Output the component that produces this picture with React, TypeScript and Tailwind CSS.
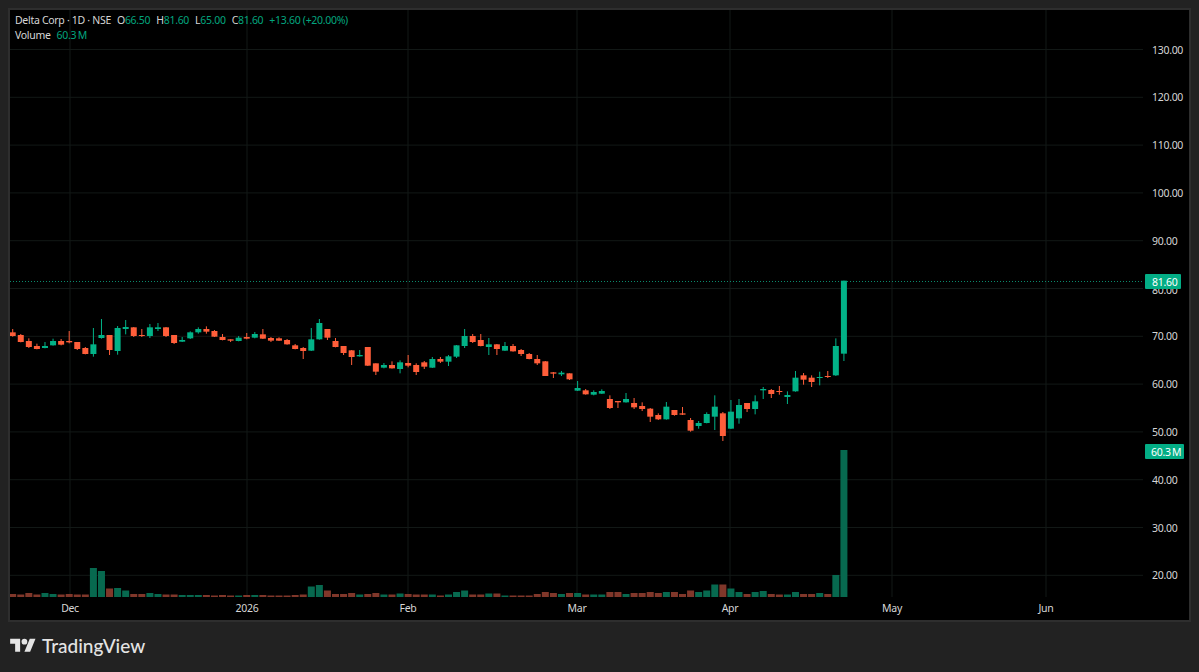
const FONT = '"Noto Sans", "Liberation Sans", sans-serif';
const LOGO_FONT = 'Lato, "Noto Sans", sans-serif';

// [wickTop, wickBottom, bodyTop, bodyBottom, up(1)/down(0), volumeHeight] in chart pixels x3, offset from y = 310
const Z2: number[][] = [
  [57,80,67,78,0,3],[72,97,75,96,0,2.5],[85,114,93,111,0,4],[101,118,108,117,0,2.5],[96,115,108,114,1,4],[86,107,93,106,1,3],[87,106,93,104,0,2.5],[63,100,93,97,0,3],[96,120,96,117,0,2.5],[111,133,114,132,0,2.5],
  [54,140,103,132,1,29],[27,86,75,84,1,26],[75,135,75,120,0,8.5],[48,134,54,123,1,9],[30,73,51,57,1,6.5],[51,81,52,78,0,3],[57,81,75,78,0,3],[42,84,52,78,1,4],[39,63,52,57,1,3],[51,81,52,78,0,2.5],
  [75,102,75,99,0,2.5],[81,96,90,95,1,2],[64,87,67,85,1,2],[52,71,57,67,1,2],[49,71,57,65,0,2],[60,81,63,80,0,1.5],[72,91,81,90,0,2],[88,96,88,92,0,1.5],[78,94,83,93,1,1.5],[69,88,81,86,0,2],
  [66,85,72,83,1,2],[57,87,73,86,0,2],[81,96,84,92,0,1.5],[82,93,85,92,0,1.5],[87,104,90,103,0,1.5],[102,118,106,117,0,2],[111,147,114,123,0,2.5],[54,123,88,122,1,10.5],[27,89,39,88,1,12],[57,90,57,83,0,6.5],
  [84,112,93,111,0,3],[108,135,108,129,0,3],[120,165,121,141,0,4],[120,140,135,139,1,2.5],[111,168,111,167,0,3],[160,195,160,185,0,4],[159,175,165,173,1,2.5],[154,176,165,175,0,2.5],[151,190,157,177,1,3.5],[135,172,159,167,0,3],
  [160,195,165,186,0,2.5],[153,177,157,170,0,2.5],[141,174,147,173,1,2.5],
];
// offset y = 320
const Z4: number[][] = [
  [111,129,117,125,0,1.5],[105,138,109,125,1,2.5],[75,114,76,110,1,5],[27,84,48,78,1,6.5],[42,69,48,66,0,2.5],[42,79,60,78,0,2.5],[54,105,73,81,1,3.5],[72,105,73,87,0,3.5],[66,93,78,92,1,1.5],[72,95,78,94,0,1.5],
  [87,108,90,102,0,1.5],[99,118,102,117,0,1.5],[105,135,117,130,0,3],[123,168,124,168,0,5],[156,174,157,161,0,4],[153,168,158,163,1,3],[160,180,160,178,0,4],[183,213,204,212,1,4],[207,224,211,223,0,2.5],[211,226,216,224,1,2.5],
  [208,222,213,221,1,2.5],[226,267,237,264,0,5],[243,264,243,247,0,5],[219,248,237,247,1,3],[234,267,249,262,0,4],
];
// offset y = 270
const Z5: number[][] = [
  [397,423,408,417,0,4],[414,456,416,440,0,5],[430,450,435,448,0,4],[396,449,410,448,1,5],[420,437,420,435,0,5],[411,435,430,434,0,3],[444,485,450,482,0,6.5],[453,476,459,468,1,5],[427,460,432,459,1,6.5],[376,480,410,440,1,12.5],
  [426,513,430,498,0,12.5],[390,477,425,476,1,8.5],[387,461,405,445,1,5],[399,426,399,417,0,3],[376,433,394,417,1,5],[351,387,357,361,1,6],[357,384,360,372,0,3],[348,374,363,366,0,2.5],[364,402,375,381,1,2.5],[303,365,323,364,1,5],
  [309,344,316,329,0,3],[316,351,323,336,0,3],[305,346,321,324,1,4],[303,324,318,320,0,3],[205,318,228,316,1,22],[32,273,32,251,1,147],
];

const toCandles = (rows: number[][], off: number) =>
  rows.map(([wt, wb, bt, bb, up, vol]) => ({
    wt: off + wt / 3,
    wb: off + wb / 3,
    bt: off + bt / 3,
    bb: off + bb / 3,
    up: up === 1,
    vol,
  }));

const candles = [...toCandles(Z2, 310), ...toCandles(Z4, 320), ...toCandles(Z5, 270)];
const cx = (i: number) => 12.7 + 8.07 * i;

const GREEN = '#02b287';
const RED = '#ff5e3a';
const VGREEN = '#07694f';
const VRED = '#80372a';
const GRID = '#121816';

const prices = [130, 120, 110, 100, 90, 80, 70, 60, 50, 40, 30, 20];
const py = (p: number) => 49.5 + (130 - p) * 4.78;
const months: [string, number][] = [['Dec', 70], ['2026', 247], ['Feb', 408], ['Mar', 577], ['Apr', 730], ['May', 892], ['Jun', 1046]];

function Chart() {
  return (
    <svg viewBox="10 10 1180 610" className="block w-[1180px] h-[610px] text-[10.5px] tracking-[-0.3px]" style={{ fontFamily: FONT }}>
      {prices.map((p) => (
        <line key={p} x1={10} x2={1143} y1={py(p)} y2={py(p)} stroke={GRID} strokeWidth={1} />
      ))}
      {months.map(([m, x]) => (
        <line key={m} x1={x} x2={x} y1={10} y2={597} stroke={GRID} strokeWidth={1} />
      ))}
      <line x1={10} x2={1143} y1={281.5} y2={281.5} stroke="#0a8a6c" strokeWidth={1} strokeDasharray="1 2" />

      {candles.map((c, i) => (
        <rect key={i} x={cx(i) - 3.5} width={7} y={597 - c.vol} height={c.vol} fill={c.up ? VGREEN : VRED} />
      ))}
      {candles.map((c, i) => {
        const col = c.up ? GREEN : RED;
        return (
          <g key={i} fill={col}>
            <rect x={cx(i) - 0.5} width={1} y={c.wt} height={c.wb - c.wt} />
            <rect x={cx(i) - 3} width={6} y={c.bt} height={Math.max(c.bb - c.bt, 1)} />
          </g>
        );
      })}

      {prices.filter((p) => p !== 80).map((p) => (
        <text key={p} x={1152} y={py(p) + 4} fill="#d6d6d6">{p}.00</text>
      ))}
      <text x={1152} y={293.5} fill="#d6d6d6">80.00</text>
      {months.map(([m, x]) => (
        <text key={m} x={x} y={612} fill="#d6d6d6" textAnchor="middle">{m}</text>
      ))}

      <rect x={1145} y={274} width={36} height={15} rx={1} fill="#03ad85" />
      <text x={1152} y={285.5} fill="#ffffff">81.60</text>
      <rect x={1145} y={444} width={39} height={15} rx={1} fill="#03ad85" />
      <text x={1151} y={455.5} fill="#ffffff">{'60.3\u2009M'}</text>
    </svg>
  );
}

function Val({ k, v }: { k: string; v: string }) {
  return (
    <span>
      {k}
      <span className="text-[#03a57f]">{v}</span>
    </span>
  );
}

export default function App() {
  return (
    <div className="w-[1199px] h-[672px] bg-[#222222] overflow-hidden flex flex-col" style={{ fontFamily: FONT }}>
      <div className="relative mt-[8px] ml-[8px] w-[1183px] h-[614px] border-2 border-[#2e2e2e] bg-black">
        <Chart />
        <div className="absolute left-[5px] top-[3px] flex flex-col text-[10.5px] tracking-[-0.3px] leading-[15px] text-[#d6d6d6]">
          <div className="flex gap-[6px] whitespace-nowrap">
            <span>Delta Corp · 1D · NSE</span>
            <Val k="O" v="66.50" />
            <Val k="H" v="81.60" />
            <Val k="L" v="65.00" />
            <Val k="C" v="81.60" />
            <span className="text-[#03a57f]">+13.60 (+20.00%)</span>
          </div>
          <div className="flex gap-[6px] whitespace-nowrap">
            <span>Volume</span>
            <span className="text-[#03a57f]">{'60.3\u2009M'}</span>
          </div>
        </div>
      </div>
      <div className="flex items-center gap-[6px] pl-[10px] pt-[11px] text-[#e4e4e4]">
        <svg viewBox="0 0 36 28" className="w-[26px] h-[20px]" fill="currentColor">
          <path d="M14 22H7V11H0V4h14v18zM28 22h-8l7.5-18h8L28 22z" />
          <circle cx="20" cy="8" r="4" />
        </svg>
        <span className="text-[19px] leading-[26px] font-medium" style={{ fontFamily: LOGO_FONT }}>TradingView</span>
      </div>
    </div>
  );
}
